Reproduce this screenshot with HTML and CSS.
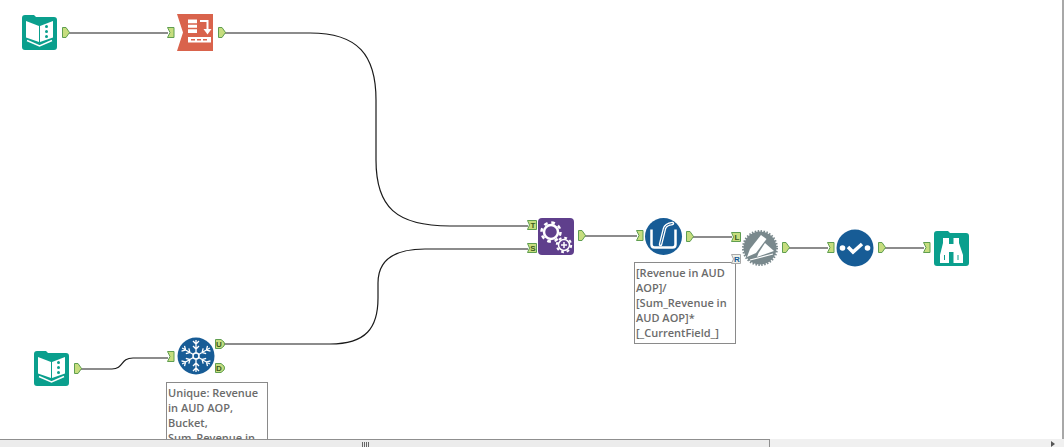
FILE: index.html
```html
<!DOCTYPE html>
<html lang="en">
<head>
    <meta charset="UTF-8">
    <title>Workflow</title>
    <link rel="stylesheet" href="styles.css">
</head>
<body>
    <div class="canvas">
        <svg class="wires" width="1064" height="438" viewBox="0 0 1064 438">
            <defs>
                <path id="out" d="M0.5 0.5H4L7.5 5.500L4 10.500H0.5Z"/>
                <path id="in" d="M0.5 0.5H7V10.500H0.5L3 5.500Z"/>
                <path id="inlabel" d="M0.5 0.5H9.500V9.500H0.5L2.500 5Z"/>
                <path id="outlabel" d="M0.5 0.5H6L9 3L9.500 5L9 7L6 9.500H0.5Z"/>
                <g id="book">
                    <path class="teal" d="M0 3Q0 0 3 0H12L14 2H32Q35 2 35 5V32Q35 35 32 35H3Q0 35 0 32Z"/>
                    <path class="white" d="M4 6L17 11V27L4 22.500Z"/>
                    <path class="white" d="M18 11L31 6V22.500L18 27Z"/>
                    <path class="none-white" d="M5 25.500L17.500 31L30 25.500"/>
                    <circle class="teal" cx="24.500" cy="11.500" r="1.500"/>
                    <circle class="teal" cx="24.500" cy="16.500" r="1.500"/>
                    <circle class="teal" cx="24.500" cy="21.500" r="1.500"/>
                </g>
                <g id="flake-arm">
                    <path class="none-white flake" d="M0 -3V-16M-3 -15L0 -12L3 -15M-3 -10L0 -7L3 -10"/>
                </g>
            </defs>

            <!-- wires -->
            <g class="wire">
                <path d="M69 33H168"/>
                <path d="M225 33H310C358 33 376 55 376 100V160C376 207 396 226 450 226H528"/>
                <path d="M224 344H330C366 344 378 328 378 298V283C378 261 393 249 425 249H528"/>
                <path d="M81 369H112C124 369 120 358 133 358H168"/>
                <path d="M585 236H637"/>
                <path d="M693 237H732"/>
                <path d="M789 248H828"/>
                <path d="M885 248H924"/>
            </g>

            <!-- input data -->
            <use href="#book" x="22" y="15"/>
            <use href="#book" x="34" y="351"/>

            <!-- orange tool -->
            <g transform="translate(177 14)">
                <path class="red" d="M0 0H36V37H0L6 18.500Z"/>
                <path class="white" d="M11 5.500H20V19H11Z"/>
                <path class="red-line" d="M11 10H20M11 14.500H20"/>
                <path class="none-white thick" d="M23 7H30.500V16"/>
                <path class="white" d="M26.500 15H34.500L30.500 20.500Z"/>
                <path class="white" d="M11 23H34V28.500H11Z"/>
                <path class="red-line" d="M14 25.750H18M20 25.750H24M26 25.750H30"/>
            </g>

            <!-- gears -->
            <g transform="translate(538 218)">
                <rect class="purple" width="36" height="37" rx="4"/>
                <circle class="gear-ring" cx="13" cy="14" r="7"/>
                <circle class="gear-teeth" cx="13" cy="14" r="9.500"/>
                <circle class="gear-ring small" cx="26" cy="27" r="5.500"/>
                <circle class="gear-teeth small" cx="26" cy="27" r="7.200"/>
                <path class="none-white" d="M23 27H29M26 24V30"/>
            </g>

            <!-- formula -->
            <g transform="translate(663.500 236.500)">
                <circle class="blue" r="18.500"/>
                <path class="none-white beaker" d="M-12 -7V8Q-12 11 -9 11H9Q12 11 12 8V-7"/>
                <path class="straw" d="M-3 8L1 -8Q2 -12 9 -13"/>
                <path class="straw-core" d="M-3 8L1 -8Q2 -12 9 -13"/>
            </g>

            <!-- grey tool -->
            <g transform="translate(760 248)">
                <circle class="saw" r="16.500"/>
                <circle class="saw-teeth" r="17"/>
                <path class="white" d="M-13 9L-10 1L1 -13L6.500 -9L-4 5Z"/>
                <path class="white" d="M5 -5L14 3L-3 9L-1.500 5Z"/>
                <path class="saw-line" d="M-10 12L13 6"/>
            </g>

            <!-- check tool -->
            <g transform="translate(855 248)">
                <circle class="blue" r="18.500"/>
                <path class="none-white check" d="M-7 -1L-2 4L7 -4"/>
                <circle class="white" cx="-12.500" r="2.800"/>
                <circle class="white" cx="12.500" r="2.800"/>
            </g>

            <!-- browse -->
            <g transform="translate(934 231)">
                <path class="teal" d="M0 3Q0 0 3 0H14L16 2H32Q35 2 35 5V32Q35 35 32 35H3Q0 35 0 32Z"/>
                <path class="white" d="M9 7H15V13H19.500V7H25V12L29 24V32H19.500V21H15V32H6V24L9 12Z"/>
                <path class="teal-line" d="M10.500 24V29M24 24V29"/>
            </g>

            <!-- snowflake -->
            <g transform="translate(196 356)">
                <circle class="blue" r="18.500"/>
                <use href="#flake-arm"/>
                <use href="#flake-arm" transform="rotate(60)"/>
                <use href="#flake-arm" transform="rotate(120)"/>
                <use href="#flake-arm" transform="rotate(180)"/>
                <use href="#flake-arm" transform="rotate(240)"/>
                <use href="#flake-arm" transform="rotate(300)"/>
                <circle class="none-white" r="3"/>
            </g>

            <!-- anchors -->
            <g class="anchor">
                <use href="#out" x="62" y="27"/>
                <use href="#in" x="167" y="27"/>
                <use href="#out" x="218" y="27"/>
                <use href="#out" x="74" y="363"/>
                <use href="#in" x="167" y="351"/>
                <use href="#out" x="578" y="230"/>
                <use href="#in" x="636" y="230"/>
                <use href="#out" x="686" y="231"/>
                <use href="#out" x="782" y="242"/>
                <use href="#in" x="827" y="242"/>
                <use href="#out" x="878" y="242"/>
                <use href="#in" x="923" y="242"/>
                <use href="#inlabel" x="527" y="220"/>
                <use href="#inlabel" x="527" y="243"/>
                <use href="#inlabel" x="731" y="232"/>
                <use href="#outlabel" x="215" y="339"/>
                <use href="#outlabel" x="215" y="363"/>
            </g>
            <g class="anchor-text">
                <text x="533" y="228">T</text>
                <text x="533" y="251">S</text>
                <text x="737" y="240">L</text>
                <text x="219" y="347">U</text>
                <text x="219" y="371">D</text>
            </g>
        </svg>

        <div class="note note-formula">[Revenue in AUD AOP]/ [Sum_Revenue in AUD AOP]* [_CurrentField_]</div>
        <div class="note note-unique">Unique: Revenue in AUD AOP, Bucket, Sum_Revenue in</div>

        <!-- this anchor sits on the note's corner -->
        <svg class="anchor-over" width="10" height="10" viewBox="0 0 10 10">
            <path d="M0.5 0.5H9.500V9.500H0.5L2.500 5Z"/>
            <text x="6" y="8">R</text>
        </svg>
    </div>

    <div class="hscroll">
        <div class="hscroll-thumb"><span class="grip"></span></div>
        <div class="hscroll-track"><span class="arrow"></span></div>
    </div>
</body>
</html>
```

FILE: styles.css
```css
body{
    margin: 0;
    background-color: white;
    overflow: hidden;
}
.canvas{
    position: relative;
    width: 1062px;
    height: 439px;
    overflow: hidden;
    border-right: 2px solid #a8a8a8;
}
.wires{
    position: absolute;
    left: 0;
    top: 0;
}
.wire path{
    fill: none;
    stroke: #1a1a1a;
    stroke-width: 1.2;
}
.teal{ fill: #0a9f8d; }
.teal-line{
    fill: none;
    stroke: #0a9f8d;
    stroke-width: 1;
}
.white{ fill: white; }
.red{ fill: #d9634c; }
.purple{ fill: #5f3f8c; }
.blue{ fill: #175c96; }
.none-white{
    fill: none;
    stroke: white;
    stroke-width: 1.5;
}
.thick{ stroke-width: 2; }
.flake{ stroke-width: 1.3; }
.check{ stroke-width: 3.5; }
.beaker{ stroke-width: 2.5; }
.straw{
    fill: none;
    stroke: white;
    stroke-width: 3.5;
    stroke-linecap: round;
}
.straw-core{
    fill: none;
    stroke: #175c96;
    stroke-width: 1;
}
.red-line{
    fill: none;
    stroke: #d9634c;
    stroke-width: 1.3;
}
.gear-ring{
    fill: none;
    stroke: white;
    stroke-width: 2.5;
}
.gear-ring.small{ stroke-width: 1.5; }
.gear-teeth{
    fill: none;
    stroke: white;
    stroke-width: 2.5;
    stroke-dasharray: 3.7 3.76;
}
.gear-teeth.small{
    stroke-width: 2;
    stroke-dasharray: 2.83 2.83;
}
.saw{ fill: #7a898d; }
.saw-teeth{
    fill: none;
    stroke: #7a898d;
    stroke-width: 2;
    stroke-dasharray: 1.5 1.47;
}
.saw-line{
    fill: none;
    stroke: white;
    stroke-width: 1.2;
}
.anchor use{
    fill: #c6dd7e;
    stroke: #5f9e50;
    stroke-width: 1;
}
.anchor-text text,
.anchor-over text{
    font-family: "Liberation Sans", sans-serif;
    font-size: 8px;
    font-weight: bold;
    fill: #3a5a20;
    text-anchor: middle;
}
.anchor-over{
    position: absolute;
    left: 731px;
    top: 254px;
}
.anchor-over path{
    fill: #eef0e8;
    stroke: #a9a9a9;
    stroke-width: 1;
}
.anchor-over text{ fill: #175c96; }
.note{
    position: absolute;
    box-sizing: border-box;
    background-color: white;
    border: 1px solid #8a8a8a;
    padding: 2px 1px;
    font-family: "Open Sans", sans-serif;
    font-size: 11px;
    font-weight: 600;
    line-height: 15px;
    color: #6b6b6b;
}
.note-formula{
    left: 634px;
    top: 262px;
    width: 102px;
    height: 82px;
}
.note-unique{
    left: 166px;
    top: 382px;
    width: 102px;
    height: 70px;
}
.hscroll{
    display: flex;
    height: 8px;
    background-color: #f0f0f0;
}
.hscroll-thumb{
    width: 770px;
    border-top: 1px solid #8f8f8f;
    border-right: 1px solid #8f8f8f;
    box-sizing: border-box;
    background-color: #ececec;
}
.grip{
    display: block;
    width: 7px;
    height: 5px;
    margin: 2px 0 0 362px;
    background: repeating-linear-gradient(90deg, #666 0, #666 1px, transparent 1px, transparent 2px);
}
.hscroll-track{
    flex: 1;
    display: flex;
    justify-content: flex-end;
    padding-right: 9px;
    background-color: #f0f0f0;
}
.arrow{
    width: 0;
    height: 0;
    margin-top: 2px;
    border-left: 4px solid #555;
    border-top: 3px solid transparent;
    border-bottom: 3px solid transparent;
}
```
